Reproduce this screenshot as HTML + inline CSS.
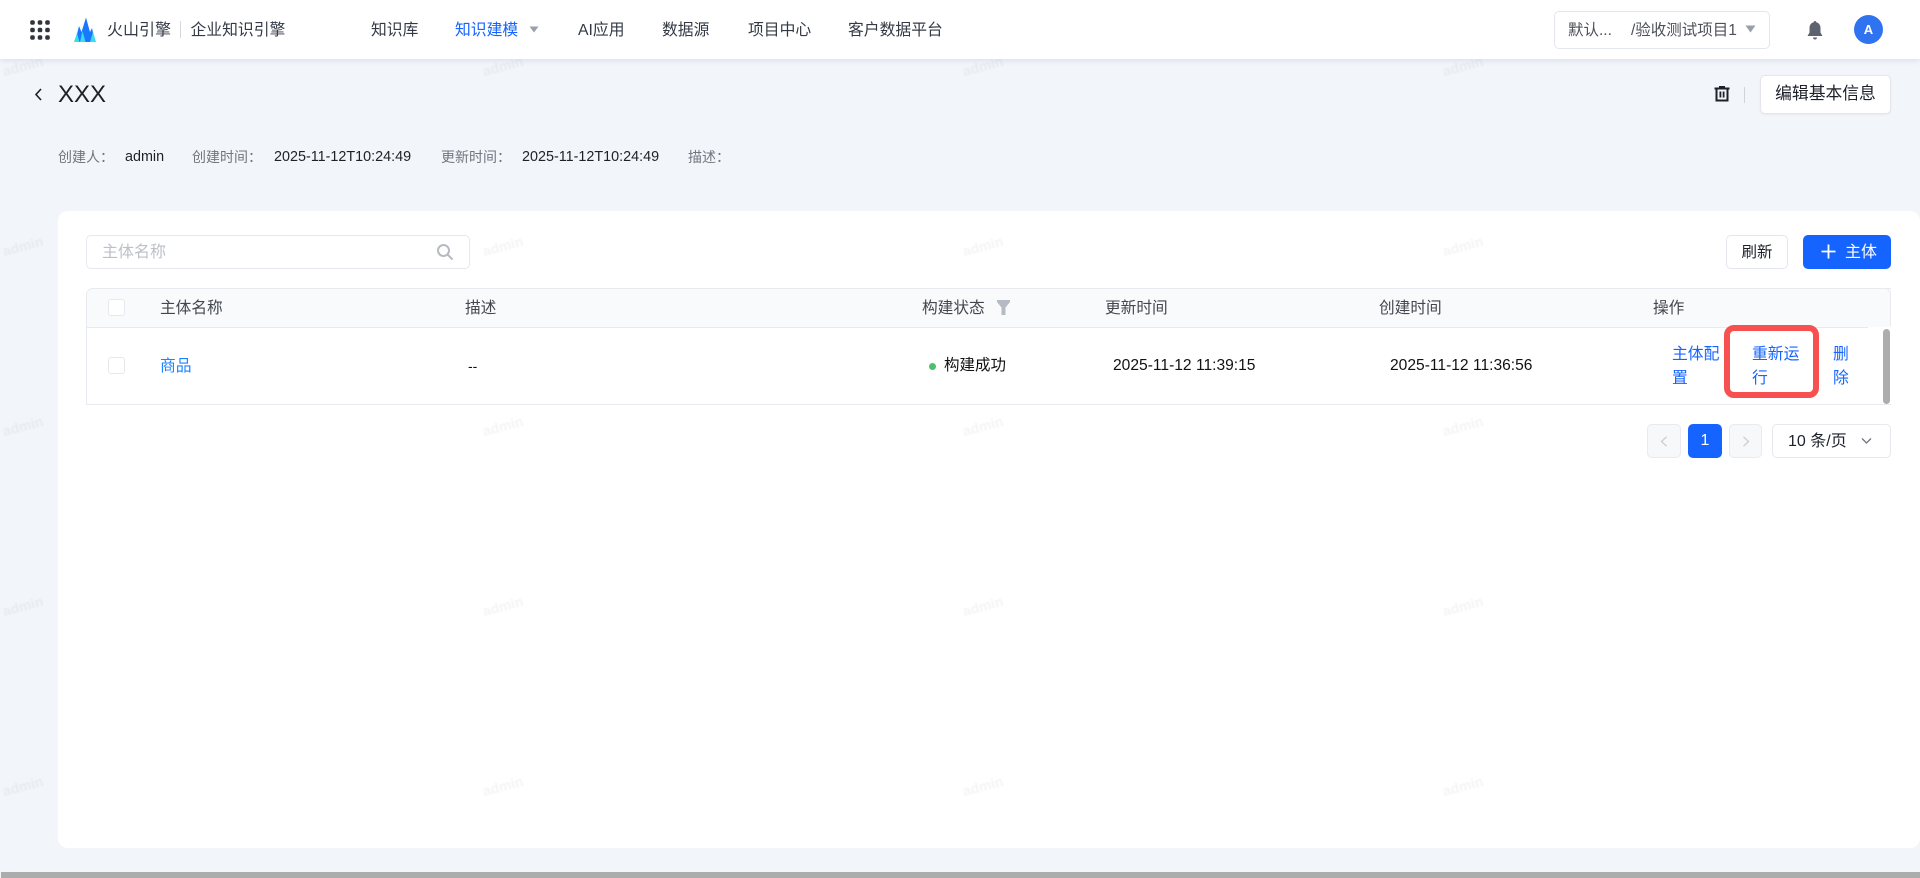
<!DOCTYPE html>
<html lang="zh-CN">
<head>
<meta charset="utf-8">
<title>XXX</title>
<style>
html,body{margin:0;padding:0;width:1920px;height:878px;overflow:hidden;background:#f2f5fa}
body{position:relative;font-family:"Liberation Sans","Noto Sans CJK SC",sans-serif;font-size:14px;color:#1d2129}
.a{position:absolute;white-space:nowrap;line-height:20px}
.box{position:absolute;box-sizing:border-box}
.wm{position:absolute;width:60px;text-align:center;font-size:14px;font-weight:bold;line-height:20px;color:rgba(30,40,60,.05);transform:rotate(-15deg);filter:blur(.4px);z-index:5}
.nav{font-size:15.800px;color:#333a45;top:21px}
.th{font-size:15.700px;color:#42464e;top:299px}
.lnk{color:#1664ff;font-size:15.800px}
.meta{top:146.500px;color:#71767f;font-size:14px}
.val{top:146.500px;font-size:14.360px}
.cb{position:absolute;left:108px;width:17px;height:17px;box-sizing:border-box;border:1px solid #e6e8ee;border-radius:3px;background:#fff}
</style>
</head>
<body>

<!-- card -->
<div class="box" style="left:58px;top:211px;width:1862px;height:637px;background:#fff;border-radius:10px"></div>

<!-- header -->
<div class="box" style="left:0;top:0;width:1920px;height:59px;background:#fff;box-shadow:0 1px 6px rgba(30,40,70,.12);z-index:10">
  <svg class="box" style="left:29px;top:19px" width="22" height="22" viewBox="0 0 22 22" fill="#30343c">
    <rect x="1.200" y="1.200" width="4.600" height="4.600" rx="1.800"/><rect x="8.700" y="1.200" width="4.600" height="4.600" rx="1.800"/><rect x="16.200" y="1.200" width="4.600" height="4.600" rx="1.800"/>
    <rect x="1.200" y="8.700" width="4.600" height="4.600" rx="1.800"/><rect x="8.700" y="8.700" width="4.600" height="4.600" rx="1.800"/><rect x="16.200" y="8.700" width="4.600" height="4.600" rx="1.800"/>
    <rect x="1.200" y="16.200" width="4.600" height="4.600" rx="1.800"/><rect x="8.700" y="16.200" width="4.600" height="4.600" rx="1.800"/><rect x="16.200" y="16.200" width="4.600" height="4.600" rx="1.800"/>
  </svg>
  <svg class="box" style="left:73px;top:17px" width="23" height="26" viewBox="0 0 23 26">
    <path d="M2 25 L6 9 L8.500 15 L13 0.500 L17 15 L19 11 L22 25Z" fill="#1a78ff"/>
    <path d="M1 25 L4 16 L6.500 25Z M7 25 L9.500 14 L12.500 25Z M17 25 L20 15 L23 25Z" fill="#38dcec"/>
  </svg>
  <div class="a" style="left:107px;top:21px;font-size:16px;color:#333a45">火山引擎</div>
  <div class="box" style="left:180px;top:21px;width:1px;height:17px;background:#d5d8de"></div>
  <div class="a" style="left:190.500px;top:21px;font-size:15.800px;color:#333a45">企业知识引擎</div>
  <div class="a nav" style="left:371px">知识库</div>
  <div class="a nav" style="left:455px;color:#1664ff">知识建模</div>
  <svg class="box" style="left:529px;top:26px" width="10" height="7" viewBox="0 0 10 7"><path d="M0.500 0.500H9.500L5 6.500Z" fill="#9aa0aa"/></svg>
  <div class="a nav" style="left:578px">AI应用</div>
  <div class="a nav" style="left:662px">数据源</div>
  <div class="a nav" style="left:748px">项目中心</div>
  <div class="a nav" style="left:848px">客户数据平台</div>

  <div class="box" style="left:1554px;top:11px;width:216px;height:38px;border:1px solid #e3e6ec;border-radius:5px;background:#fff"></div>
  <div class="a" style="left:1568px;top:21px;font-size:15.500px;color:#4c5059">默认...</div>
  <div class="a" style="left:1631px;top:21px;font-size:15.500px;color:#4c5059">/验收测试项目1</div>
  <svg class="box" style="left:1745px;top:25px" width="11" height="8" viewBox="0 0 11 8"><path d="M0.500 0.500H10.500L5.500 7.500Z" fill="#9aa0aa"/></svg>
  <svg class="box" style="left:1807px;top:20px" width="16" height="20" viewBox="0 0 16 20" fill="#5d6470">
    <path d="M8 1C8.800 1 9.300 1.500 9.300 2.300C12 3 13.500 5.200 13.500 8V12.500L15.500 16H0.500L2.500 12.500V8C2.500 5.200 4 3 6.700 2.300C6.700 1.500 7.200 1 8 1Z"/>
    <path d="M6 17.500H10C10 18.700 9 19.500 8 19.500S6 18.700 6 17.500Z"/>
  </svg>
  <div class="box" style="left:1854px;top:15px;width:29px;height:29px;border-radius:50%;background:#2f73f0;color:#fff;text-align:center;font-size:13px;font-weight:bold;line-height:29px">A</div>
</div>

<!-- title row -->
<svg class="box" style="left:33px;top:88px" width="11" height="13" viewBox="0 0 11 13"><path d="M8 1L3 6.500L8 12" fill="none" stroke="#1d2129" stroke-width="1.600"/></svg>
<div class="a" style="left:58px;top:82px;font-size:24px;line-height:26px;color:#1d2129">XXX</div>

<svg class="box" style="left:1714px;top:85px" width="16" height="17" viewBox="0 0 16 17" fill="#1d2129">
  <path d="M5 1H11V2.500H15.500V4.500H14.500V16.500H1.500V4.500H0.500V2.500H5ZM3.500 4.500V14.500H12.500V4.500Z"/>
  <rect x="5.500" y="6.500" width="1.800" height="6"/><rect x="8.700" y="6.500" width="1.800" height="6"/>
</svg>
<div class="box" style="left:1744px;top:87px;width:1px;height:16px;background:#cfd3da"></div>
<div class="box" style="left:1760px;top:75px;width:131px;height:39px;background:#fff;border:1px solid #e3e6ec;border-radius:5px;box-shadow:0 1px 2px rgba(0,0,0,.05);text-align:center;font-size:16.800px;line-height:36px;color:#1d2129">编辑基本信息</div>

<!-- meta -->
<div class="a meta" style="left:58px">创建人：</div>
<div class="a val" style="left:125px">admin</div>
<div class="a meta" style="left:192px">创建时间：</div>
<div class="a val" style="left:274px">2025-11-12T10:24:49</div>
<div class="a meta" style="left:441px">更新时间：</div>
<div class="a val" style="left:522px">2025-11-12T10:24:49</div>
<div class="a meta" style="left:688px">描述：</div>

<!-- search -->
<div class="box" style="left:86px;top:235px;width:384px;height:34px;border:1px solid #e6e8ee;border-radius:5px;background:#fff"></div>
<div class="a" style="left:102px;top:243px;font-size:16px;color:#bcc0c7">主体名称</div>
<svg class="box" style="left:436px;top:243px" width="18" height="18" viewBox="0 0 18 18" fill="none" stroke="#b6bac3" stroke-width="2"><circle cx="7.500" cy="7.500" r="5.500"/><path d="M11.500 11.500L16.500 16.500"/></svg>

<!-- top buttons -->
<div class="box" style="left:1726px;top:235px;width:62px;height:34px;background:#fff;border:1px solid #e3e6ec;border-radius:5px;text-align:center;line-height:34px;font-size:15.500px;color:#1d2129">刷新</div>
<div class="box" style="left:1803px;top:235px;width:88px;height:34px;background:#1664ff;border-radius:5px"></div>
<svg class="box" style="left:1821px;top:244px" width="15" height="15" viewBox="0 0 15 15"><path d="M7.500 0.500V14.500M0.500 7.500H14.500" stroke="#fff" stroke-width="1.800" fill="none"/></svg>
<div class="a" style="left:1845px;top:243px;font-size:16px;color:#fff">主体</div>

<!-- table -->
<div class="box" style="left:86px;top:288px;width:1805px;height:117px;border:1px solid #e8eaef;border-right:0;border-radius:7px 0 0 0;background:#fff"></div>
<div class="box" style="left:87px;top:288px;width:1804px;height:40px;background:#f9fafc;border-top:1px solid #e8eaef;border-right:1px solid #e8eaef;border-bottom:1px solid #e8eaef;border-radius:6px 6px 0 0"></div>
<div class="box" style="left:1868px;top:326px;width:23px;height:3px;background:#fff"></div>
<div class="box" style="left:1868px;top:326px;width:23px;height:1px;background:#f9fafc"></div>
<div class="cb" style="top:299px"></div>
<div class="cb" style="top:357px"></div>
<div class="a th" style="left:160px">主体名称</div>
<div class="a th" style="left:465px">描述</div>
<div class="a th" style="left:922px">构建状态</div>
<svg class="box" style="left:997px;top:300px" width="13" height="15" viewBox="0 0 13 15"><path d="M0 0H13V2L8.500 7.500V15H4.500V7.500L0 2Z" fill="#b6bac3"/></svg>
<div class="a th" style="left:1105px">更新时间</div>
<div class="a th" style="left:1379px">创建时间</div>
<div class="a th" style="left:1653px">操作</div>

<div class="a" style="left:160px;top:357px;font-size:15.800px;color:#1a85ff">商品</div>
<div class="a" style="left:468px;top:356px;color:#111">--</div>
<div class="box" style="left:928.500px;top:363px;width:7px;height:7px;border-radius:50%;background:#4cc06a"></div>
<div class="a" style="left:944px;top:356px;font-size:15.500px;color:#111">构建成功</div>
<div class="a" style="left:1113px;top:356px;font-size:15.600px;color:#111">2025-11-12 11:39:15</div>
<div class="a" style="left:1390px;top:356px;font-size:15.600px;color:#111">2025-11-12 11:36:56</div>

<div class="a lnk" style="left:1672px;top:345px">主体配</div>
<div class="a lnk" style="left:1672px;top:369px">置</div>
<div class="a lnk" style="left:1752px;top:345px">重新运</div>
<div class="a lnk" style="left:1752px;top:369px">行</div>
<div class="a lnk" style="left:1833px;top:345px">删</div>
<div class="a lnk" style="left:1833px;top:369px">除</div>
<div class="box" style="left:1723.500px;top:324.500px;width:95.500px;height:73px;border:6px solid #f75050;border-radius:10px;z-index:6"></div>
<div class="box" style="left:1883px;top:329px;width:7px;height:75px;background:#adadad;border-radius:4px"></div>

<!-- pagination -->
<div class="box" style="left:1647px;top:424px;width:34px;height:34px;background:#f7f8fa;border:1px solid #e8eaef;border-radius:5px"></div>
<svg class="box" style="left:1660px;top:436px" width="8" height="11" viewBox="0 0 8 11"><path d="M6.500 0.800L1.500 5.500L6.500 10.200" fill="none" stroke="#c9cdd4" stroke-width="1.300"/></svg>
<div class="box" style="left:1688px;top:424px;width:34px;height:34px;background:#1664ff;border-radius:5px;text-align:center;color:#fff;font-size:16px;line-height:34px">1</div>
<div class="box" style="left:1729px;top:424px;width:33px;height:34px;background:#f7f8fa;border:1px solid #e8eaef;border-radius:5px"></div>
<svg class="box" style="left:1742px;top:436px" width="8" height="11" viewBox="0 0 8 11"><path d="M1.500 0.800L6.500 5.500L1.500 10.200" fill="none" stroke="#c9cdd4" stroke-width="1.300"/></svg>
<div class="box" style="left:1772px;top:424px;width:119px;height:34px;background:#fff;border:1px solid #e6e8ee;border-radius:5px"></div>
<div class="a" style="left:1788px;top:432px;font-size:16px;color:#1d2129">10 条/页</div>
<svg class="box" style="left:1861px;top:437px" width="11" height="8" viewBox="0 0 11 8"><path d="M1 1.500L5.500 6L10 1.500" fill="none" stroke="#6f747d" stroke-width="1.300"/></svg>

<!-- bottom scrollbar -->
<div class="box" style="left:1px;top:872px;width:1919px;height:6px;background:#acacac"></div>

<!-- watermarks -->
<div class="wm" style="left:-7px;top:56px">admin</div><div class="wm" style="left:473px;top:56px">admin</div><div class="wm" style="left:953px;top:56px">admin</div><div class="wm" style="left:1433px;top:56px">admin</div>
<div class="wm" style="left:-7px;top:236px">admin</div><div class="wm" style="left:473px;top:236px">admin</div><div class="wm" style="left:953px;top:236px">admin</div><div class="wm" style="left:1433px;top:236px">admin</div>
<div class="wm" style="left:-7px;top:416px">admin</div><div class="wm" style="left:473px;top:416px">admin</div><div class="wm" style="left:953px;top:416px">admin</div><div class="wm" style="left:1433px;top:416px">admin</div>
<div class="wm" style="left:-7px;top:596px">admin</div><div class="wm" style="left:473px;top:596px">admin</div><div class="wm" style="left:953px;top:596px">admin</div><div class="wm" style="left:1433px;top:596px">admin</div>
<div class="wm" style="left:-7px;top:776px">admin</div><div class="wm" style="left:473px;top:776px">admin</div><div class="wm" style="left:953px;top:776px">admin</div><div class="wm" style="left:1433px;top:776px">admin</div>

</body>
</html>
